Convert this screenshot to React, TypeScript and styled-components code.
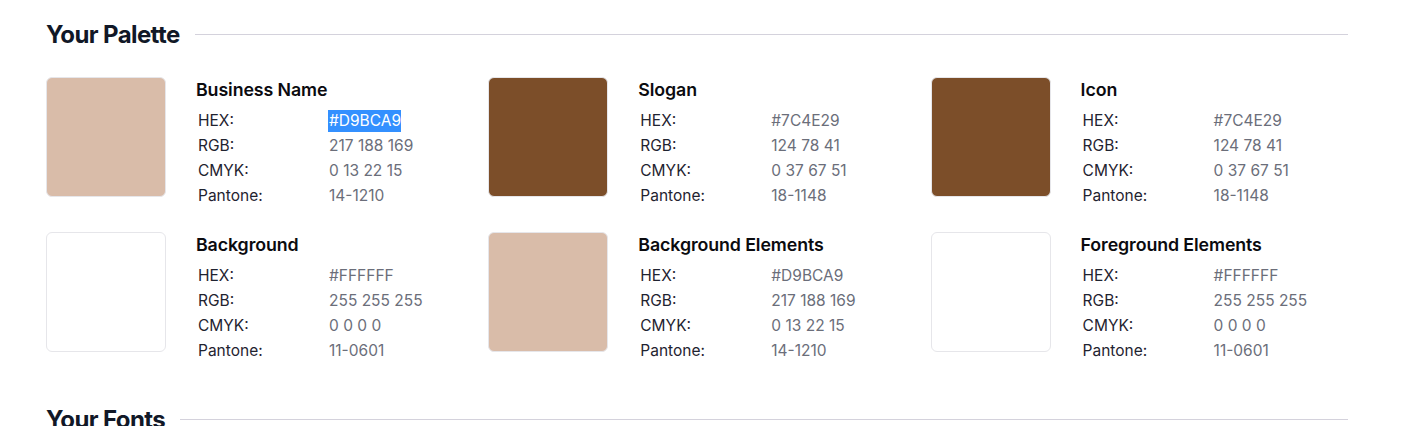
import React from "react";
import styled, { createGlobalStyle } from "styled-components";

const Global = createGlobalStyle`
  html, body { margin: 0; padding: 0; background: #ffffff; }
  body { font-family: Inter, "Noto Sans", sans-serif; color: #111827; }
`;

const Page = styled.div`
  padding: 14px 75px 0 46px;
`;

const Section = styled.section`
  margin-bottom: 36px;
`;

const SectionHeader = styled.div`
  display: flex;
  align-items: center;
  gap: 15px;
  height: 40px;
  margin-bottom: 23px;
`;

const Heading = styled.h2`
  margin: 0;
  font-size: 24px;
  font-weight: 700;
  letter-spacing: -0.6px;
  color: #111827;
  white-space: nowrap;
`;

const Rule = styled.div`
  flex: 1;
  height: 1px;
  background: #d4d2dc;
`;

const Grid = styled.div`
  display: grid;
  grid-template-columns: repeat(3, 418px);
  column-gap: 24.3px;
  row-gap: 24px;
`;

const Card = styled.div`
  display: flex;
  gap: 30px;
`;

const Swatch = styled.div<{ $color: string }>`
  width: 120px;
  height: 120px;
  flex: none;
  box-sizing: border-box;
  border-radius: 6px;
  background: ${(p) => p.$color};
  border: 1px solid #e6e6ea;
`;

const Info = styled.div`
  display: flex;
  flex-direction: column;
  padding-top: 1px;
`;

const Title = styled.div`
  font-size: 17.8px;
  font-weight: 600;
  line-height: 24px;
  color: #0b0b0f;
  margin-bottom: 6px;
  letter-spacing: -0.1px;
`;

const Row = styled.div`
  display: flex;
  align-items: center;
  height: 25px;
  padding-left: 2px;
  font-size: 15.5px;
`;

const Label = styled.span`
  width: 131px;
  color: #1f2330;
`;

const Value = styled.span<{ $selected?: boolean }>`
  color: ${(p) => (p.$selected ? "#ffffff" : "#6b6e7a")};
  background: ${(p) => (p.$selected ? "#3390ff" : "transparent")};
  line-height: 22px;
  margin-left: -1px;
  padding: 0 0 0 1px;
`;

type Color = {
  name: string;
  hex: string;
  rgb: string;
  cmyk: string;
  pantone: string;
  selected?: boolean;
};

const colors: Color[] = [
  { name: "Business Name", hex: "#D9BCA9", rgb: "217 188 169", cmyk: "0 13 22 15", pantone: "14-1210", selected: true },
  { name: "Slogan", hex: "#7C4E29", rgb: "124 78 41", cmyk: "0 37 67 51", pantone: "18-1148" },
  { name: "Icon", hex: "#7C4E29", rgb: "124 78 41", cmyk: "0 37 67 51", pantone: "18-1148" },
  { name: "Background", hex: "#FFFFFF", rgb: "255 255 255", cmyk: "0 0 0 0", pantone: "11-0601" },
  { name: "Background Elements", hex: "#D9BCA9", rgb: "217 188 169", cmyk: "0 13 22 15", pantone: "14-1210" },
  { name: "Foreground Elements", hex: "#FFFFFF", rgb: "255 255 255", cmyk: "0 0 0 0", pantone: "11-0601" },
];

export default function App() {
  return (
    <Page>
      <Global />
      <Section>
        <SectionHeader>
          <Heading>Your Palette</Heading>
          <Rule />
        </SectionHeader>
        <Grid>
          {colors.map((c) => (
            <Card key={c.name}>
              <Swatch $color={c.hex} />
              <Info>
                <Title>{c.name}</Title>
                <Row>
                  <Label>HEX:</Label>
                  <Value $selected={c.selected}>{c.hex}</Value>
                </Row>
                <Row>
                  <Label>RGB:</Label>
                  <Value>{c.rgb}</Value>
                </Row>
                <Row>
                  <Label>CMYK:</Label>
                  <Value>{c.cmyk}</Value>
                </Row>
                <Row>
                  <Label>Pantone:</Label>
                  <Value>{c.pantone}</Value>
                </Row>
              </Info>
            </Card>
          ))}
        </Grid>
      </Section>
      <Section>
        <SectionHeader>
          <Heading>Your Fonts</Heading>
          <Rule />
        </SectionHeader>
      </Section>
    </Page>
  );
}
